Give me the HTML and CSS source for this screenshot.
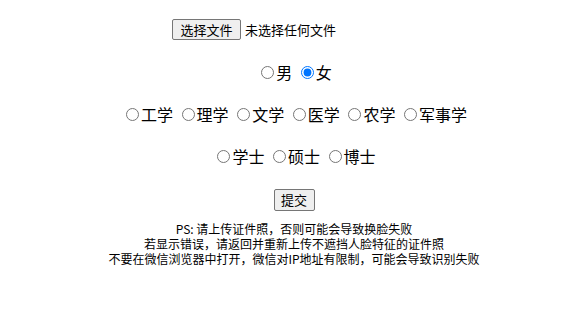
FILE: index.html
```html
<!DOCTYPE html>
<html lang="zh-CN">
<head>
<meta charset="utf-8">
<link rel="stylesheet" href="styles.css">
</head>
<body>
<form class="form">
  <div class="row file-row">
    <label class="file">
      <input type="file" class="file-native">
      <span class="btn file-btn">选择文件</span><span class="file-text">未选择任何文件</span>
    </label>
  </div>
  <div class="row"><label><input type="radio" name="sex">男</label> <label><input type="radio" name="sex" checked>女</label></div>
  <div class="row"><label><input type="radio" name="major">工学</label> <label><input type="radio" name="major">理学</label> <label><input type="radio" name="major">文学</label> <label><input type="radio" name="major">医学</label> <label><input type="radio" name="major">农学</label> <label><input type="radio" name="major">军事学</label></div>
  <div class="row"><label><input type="radio" name="deg">学士</label> <label><input type="radio" name="deg">硕士</label> <label><input type="radio" name="deg">博士</label></div>
  <div class="row"><button type="button" class="btn submit">提交</button></div>
  <div class="note">PS: 请上传证件照，否则可能会导致换脸失败<br>若显示错误，请返回并重新上传不遮挡人脸特征的证件照<br>不要在微信浏览器中打开，微信对IP地址有限制，可能会导致识别失败</div>
</form>
</body>
</html>
```
FILE: styles.css
```css
body {
  margin: 0;
  font-family: "Noto Sans CJK SC", "Noto Sans", sans-serif;
  color: #000;
  background: #fff;
}
.form {
  display: flex;
  flex-direction: column;
  align-items: center;
  padding-top: 18px;
}
.row {
  font-size: 16px;
  line-height: 22px;
  text-align: center;
  margin-bottom: 20px;
}
.file-row {
  margin-bottom: 21px;
  line-height: 21px;
}
.file {
  display: inline-flex;
  align-items: center;
  width: 244px;
  font-size: 13px;
  position: relative;
}
.file-native {
  position: absolute;
  width: 1px;
  height: 1px;
  opacity: 0;
  overflow: hidden;
}
.btn {
  display: inline-block;
  box-sizing: border-box;
  height: 21px;
  padding: 0;
  text-align: center;
  font-family: "Noto Sans CJK SC", sans-serif;
  font-size: 13px;
  line-height: 19px;
  color: #000;
  background: #efefef;
  border: 1px solid #767676;
  border-radius: 2px;
}
.file-btn {
  width: 69px;
}
.file-text {
  margin-left: 4px;
  white-space: nowrap;
}
input[type=radio] {
  margin: 3px 2px 0 5px;
  width: 13px;
  height: 13px;
}
.submit {
  margin: 0;
  width: 41px;
  height: 22px;
  line-height: 20px;
}
.note {
  font-size: 12px;
  line-height: 15px;
  text-align: center;
  margin-top: -10px;
}
```
